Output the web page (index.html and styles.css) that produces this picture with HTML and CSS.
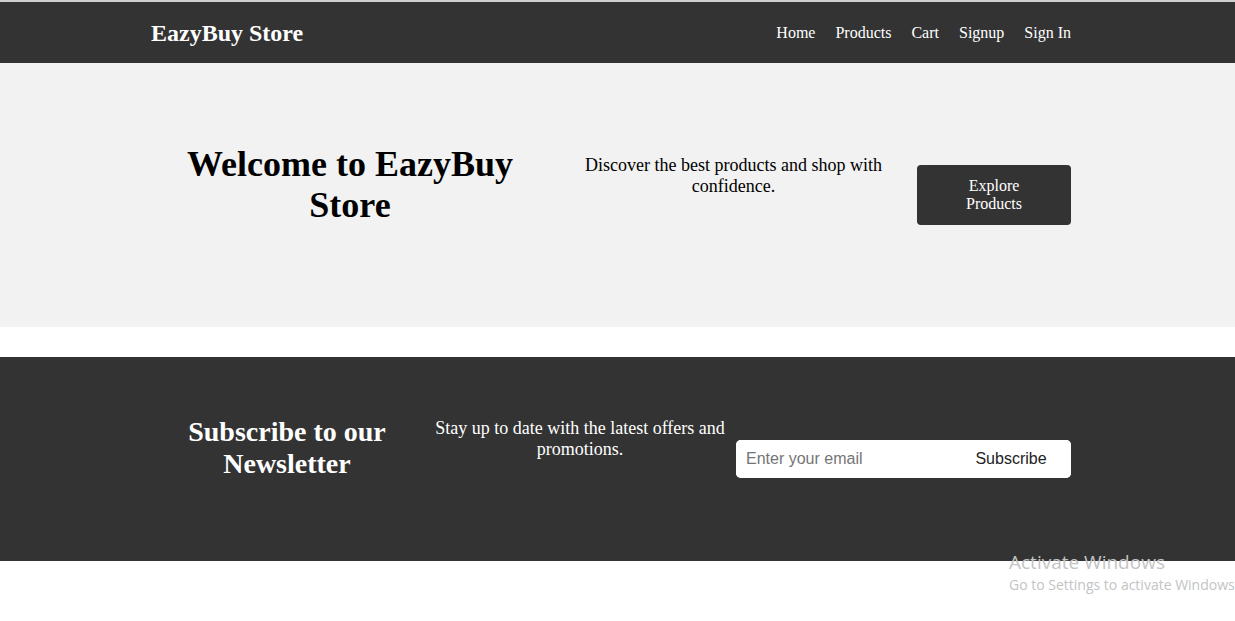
FILE: index.html
```html
<!DOCTYPE html>
<html lang="en">
<head>
<meta charset="utf-8">
<title>EazyBuy Store</title>
<link rel="stylesheet" href="styles.css">
</head>
<body>
  <div class="topline"></div>
  <header class="navbar">
    <div class="container nav-inner">
      <div class="logo">EazyBuy Store</div>
      <nav class="links">
        <a href="#">Home</a>
        <a href="#">Products</a>
        <a href="#">Cart</a>
        <a href="#">Signup</a>
        <a href="#">Sign In</a>
      </nav>
    </div>
  </header>

  <section class="hero">
    <div class="container hero-inner">
      <h1 class="hero-title">Welcome to EazyBuy Store</h1>
      <p class="hero-text">Discover the best products and shop with confidence.</p>
      <a href="#" class="hero-btn">Explore Products</a>
    </div>
  </section>

  <section class="newsletter">
    <div class="container news-inner">
      <h2 class="news-title">Subscribe to our Newsletter</h2>
      <p class="news-text">Stay up to date with the latest offers and promotions.</p>
      <form class="news-form">
        <input class="news-input" type="email" placeholder="Enter your email">
        <button class="news-btn" type="button">Subscribe</button>
      </form>
    </div>
  </section>

  <div class="watermark">
    <div class="wm-title">Activate Windows</div>
    <div class="wm-sub">Go to Settings to activate Windows.</div>
  </div>
</body>
</html>
```

FILE: styles.css
```css
* { box-sizing: border-box; }

html, body {
  margin: 0;
  padding: 0;
  background: #ffffff;
  font-family: "Liberation Serif", "Times New Roman", serif;
  color: #000;
  overflow: hidden;
}

.topline {
  height: 2px;
  background: #cfcfcf;
}

.container {
  width: 921px;
  margin-left: 150px;
}

.navbar {
  background: #333333;
  height: 61px;
}

.nav-inner {
  height: 100%;
  display: flex;
  align-items: center;
  justify-content: space-between;
}

.logo {
  color: #ffffff;
  font-size: 24px;
  font-weight: bold;
  margin-left: 1px;
  margin-top: 1px;
}

.links {
  display: flex;
  gap: 20px;
}

.links a {
  color: #ffffff;
  text-decoration: none;
  font-size: 16px;
}

.hero {
  background: #f2f2f2;
  height: 264px;
  padding-top: 81px;
}

.hero-inner {
  display: grid;
  grid-template-columns: 400px 1fr 154px;
  column-gap: 17px;
  align-items: start;
}

.hero-title {
  margin: 0;
  font-size: 36px;
  font-weight: bold;
  text-align: center;
  line-height: 1.15;
}

.hero-text {
  margin: 11px 0 0;
  font-size: 18px;
  text-align: center;
  line-height: 21px;
}

.hero-btn {
  margin-top: 21px;
  display: block;
  background: #333333;
  color: #ffffff;
  text-decoration: none;
  text-align: center;
  font-size: 16px;
  line-height: 18px;
  padding: 12px 40px;
  border-radius: 4px;
}

.newsletter {
  margin-top: 30px;
  background: #333333;
  color: #ffffff;
  height: 204px;
  padding-top: 59px;
}

.news-inner {
  display: grid;
  grid-template-columns: 274px 1fr 335px;
  column-gap: 10px;
  align-items: start;
}

.news-title {
  margin: 0;
  font-size: 28px;
  font-weight: bold;
  text-align: center;
  line-height: 32px;
}

.news-text {
  margin: 0;
  padding-top: 2px;
  font-size: 18px;
  line-height: 21px;
  text-align: center;
}

.news-form {
  margin: 24px 0 0;
  display: flex;
  background: #ffffff;
  border-radius: 5px;
  height: 38px;
  overflow: hidden;
}

.news-input {
  flex: 1;
  min-width: 0;
  border: none;
  outline: none;
  background: #ffffff;
  padding: 0 10px;
  font-family: "Liberation Sans", Arial, sans-serif;
  font-size: 16px;
  color: #333;
}

.news-input::placeholder {
  color: #757575;
}

.news-btn {
  width: 120px;
  border: none;
  background: #ffffff;
  color: #222222;
  font-family: "Liberation Sans", Arial, sans-serif;
  font-size: 16px;
  padding: 0;
}

.watermark {
  position: absolute;
  left: 1009px;
  top: 550px;
  font-family: "Open Sans", "Noto Sans", sans-serif;
  color: #c4c4c4;
  white-space: nowrap;
}

.wm-title {
  font-size: 19px;
  line-height: 24px;
}

.wm-sub {
  font-size: 14px;
  line-height: 22px;
}
```
